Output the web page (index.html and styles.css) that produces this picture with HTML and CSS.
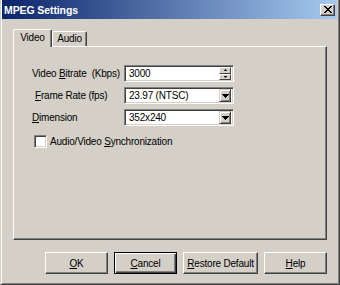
FILE: index.html
```html
<!DOCTYPE html>
<html lang="en">
<head>
  <meta charset="UTF-8" />
  <title>MPEG Settings</title>
  <link rel="stylesheet" href="styles.css">
</head>
<body>
  <div class="window">
    <div class="titlebar">
      <span class="title">MPEG Settings</span>
      <button class="close-btn">
        <svg width="8" height="7" viewBox="0 0 8 7"><path d="M0 0h2v1h1v1h2v-1h1v-1h2v1h-1v1h-1v1h-1v1h1v1h1v1h1v1h-2v-1h-1v-1h-2v1h-1v1h-2v-1h1v-1h1v-1h1v-1h-1v-1h-1v-1h-1z" fill="#000"/></svg>
      </button>
    </div>

    <div class="content">
      <div class="tabs">
        <div class="tab active">Video</div>
        <div class="tab">Audio</div>
      </div>

      <div class="panel">
        <div class="form">
          <label class="lbl">Video <u>B</u>itrate&nbsp; (Kbps)</label>
          <div class="field">
            <span class="value">3000</span>
            <div class="spin">
              <div class="spin-btn"><svg width="5" height="3" viewBox="0 0 5 3"><path d="M2 0h1v1h1v1h1v1h-5v-1h1v-1h1z" fill="#000"/></svg></div>
              <div class="spin-btn"><svg width="5" height="3" viewBox="0 0 5 3"><path d="M0 0h5v1h-1v1h-1v1h-1v-1h-1v-1h-1z" fill="#000"/></svg></div>
            </div>
          </div>

          <label class="lbl indent"><u>F</u>rame Rate (fps)</label>
          <div class="field">
            <span class="value">23.97 (NTSC)</span>
            <div class="drop-btn"><svg width="7" height="4" viewBox="0 0 7 4"><path d="M0 0h7v1h-1v1h-1v1h-1v1h-1v-1h-1v-1h-1v-1h-1z" fill="#000"/></svg></div>
          </div>

          <label class="lbl"><u>D</u>imension</label>
          <div class="field">
            <span class="value">352x240</span>
            <div class="drop-btn"><svg width="7" height="4" viewBox="0 0 7 4"><path d="M0 0h7v1h-1v1h-1v1h-1v1h-1v-1h-1v-1h-1v-1h-1z" fill="#000"/></svg></div>
          </div>
        </div>

        <div class="check-row">
          <span class="checkbox"></span>
          <span>Audio/Video <u>S</u>ynchronization</span>
        </div>
      </div>

      <div class="buttons">
        <button class="btn"><u>O</u>K</button>
        <button class="btn default"><u>C</u>ancel</button>
        <button class="btn wide"><u>R</u>estore Default</button>
        <button class="btn"><u>H</u>elp</button>
      </div>
    </div>
  </div>
</body>
</html>
```

FILE: styles.css
```css
* {
  margin: 0;
  padding: 0;
  box-sizing: border-box;
}

body {
  background: #d4d0c8;
  font-family: 'Liberation Sans', Arial, sans-serif;
  font-size: 10px;
  letter-spacing: -0.2px;
  color: #000;
  white-space: nowrap;
}

u {
  text-decoration: underline;
  text-underline-offset: 1px;
}

.window {
  width: 340px;
  height: 285px;
  background: #d4d0c8;
  border-left: 1px solid #d4d0c8;
  border-right: 1px solid #404040;
  border-bottom: 1px solid #404040;
  box-shadow: inset 1px 0 #fff, inset -1px -1px #808080;
  padding: 0 2px 2px 1px;
  display: flex;
  flex-direction: column;
}

.titlebar {
  height: 19px;
  background: linear-gradient(to right, #0a246a, #a6caf0);
  display: flex;
  align-items: center;
  justify-content: space-between;
  padding: 0 2px 0 2px;
}

.title {
  color: #fff;
  font-weight: bold;
  font-size: 10.5px;
  letter-spacing: -0.1px;
}

.close-btn {
  width: 15px;
  height: 12px;
  background: #d4d0c8;
  border: 1px solid;
  border-color: #fff #404040 #404040 #fff;
  box-shadow: inset -1px -1px #808080;
  display: flex;
  align-items: center;
  justify-content: center;
  padding-bottom: 1px;
}

.content {
  flex: 1;
  padding: 10px 10px 0 11px;
  display: flex;
  flex-direction: column;
}

.tabs {
  display: flex;
  align-items: flex-end;
  height: 17px;
  padding-left: 1px;
  position: relative;
  z-index: 1;
}

.tab {
  height: 15px;
  width: 35px;
  text-align: center;
  border: 1px solid;
  border-color: #fff #404040 transparent #fff;
  border-bottom: none;
  box-shadow: inset -1px 0 #808080;
  border-radius: 2px 2px 0 0;
  line-height: 14px;
  background: #d4d0c8;
}

.tab.active {
  height: 18px;
  margin-bottom: -1px;
  margin-left: -1px;
  line-height: 16px;
  width: 39px;
}

.panel {
  height: 194px;
  border: 1px solid;
  border-color: #fff #404040 #404040 #fff;
  box-shadow: inset -1px -1px #808080;
  padding: 18px 0 0 18px;
}

.form {
  display: grid;
  grid-template-columns: 92px 110px;
  grid-auto-rows: 17px;
  row-gap: 5px;
  align-items: center;
}

.lbl.indent {
  padding-left: 3px;
}

.field {
  height: 17px;
  background: #fff;
  border: 1px solid;
  border-color: #808080 #fff #fff #808080;
  box-shadow: inset 1px 1px #404040, inset -1px -1px #d4d0c8;
  display: flex;
  align-items: center;
  justify-content: space-between;
  padding: 2px 2px 2px 4px;
}

.value {
  line-height: 13px;
}

.drop-btn {
  width: 12px;
  height: 13px;
  background: #d4d0c8;
  border: 1px solid;
  border-color: #d4d0c8 #404040 #404040 #d4d0c8;
  box-shadow: inset 1px 1px #fff, inset -1px -1px #808080;
  display: flex;
  align-items: center;
  justify-content: center;
}

.spin {
  display: flex;
  flex-direction: column;
  height: 13px;
}

.spin-btn {
  width: 12px;
  flex: 1;
  background: #d4d0c8;
  border: 1px solid;
  border-color: #fff #404040 #404040 #fff;
  display: flex;
  align-items: center;
  justify-content: center;
}

.spin-btn svg {
  width: 3px;
  height: 2px;
}

.check-row {
  display: flex;
  align-items: center;
  gap: 3px;
  margin: 9px 0 0 2px;
}

.checkbox {
  width: 13px;
  height: 13px;
  background: #fff;
  border: 1px solid;
  border-color: #808080 #fff #fff #808080;
  box-shadow: inset 1px 1px #404040, inset -1px -1px #d4d0c8;
}

.buttons {
  display: flex;
  justify-content: flex-end;
  gap: 6px;
  margin-top: 12px;
}

.btn {
  width: 63px;
  height: 22px;
  background: #d4d0c8;
  font-family: 'Liberation Sans', Arial, sans-serif;
  font-size: 10px;
  letter-spacing: -0.2px;
  color: #000;
  border: 1px solid;
  border-color: #fff #404040 #404040 #fff;
  box-shadow: inset -1px -1px #808080;
}

.btn.wide {
  width: 75px;
}

.btn.default {
  border: 1px solid #000;
  box-shadow: inset 1px 1px #fff, inset -1px -1px #404040, inset -2px -2px #808080;
}
```
